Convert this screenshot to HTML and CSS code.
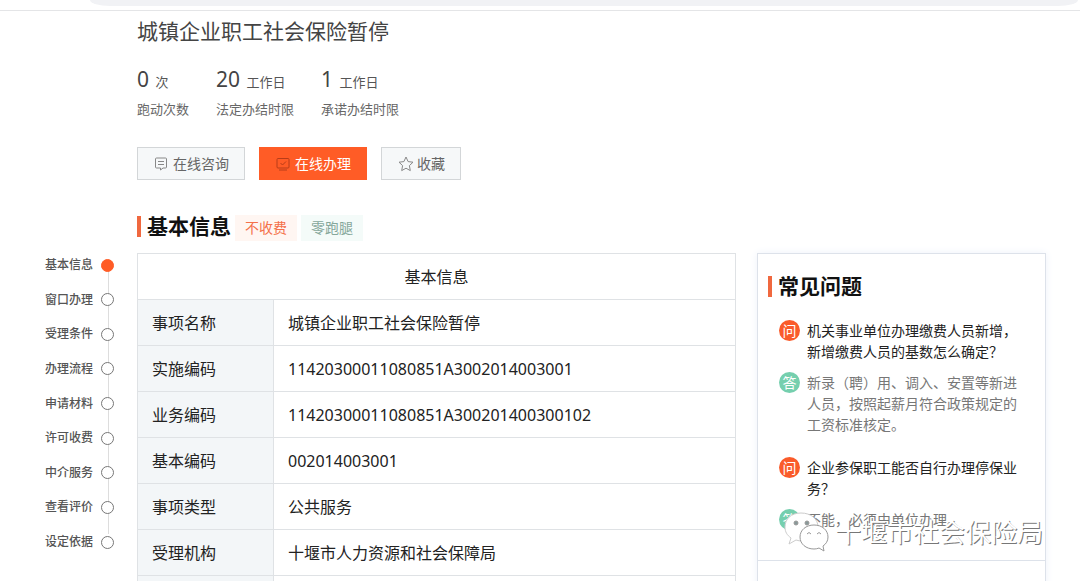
FILE: index.html
```html
<!DOCTYPE html>
<html lang="zh-CN">
<head>
<meta charset="utf-8">
<title>城镇企业职工社会保险暂停</title>
<link rel="stylesheet" href="styles.css">
</head>
<body>
<div class="page">
  <div class="browser-bar"><div class="address"></div></div>
  <div class="layout">
    <header class="summary">
      <h1 class="title">城镇企业职工社会保险暂停</h1>
      <dl class="stats">
        <div class="stat"><dd><b>0</b> 次</dd><dt>跑动次数</dt></div>
        <div class="stat"><dd><b>20</b> 工作日</dd><dt>法定办结时限</dt></div>
        <div class="stat"><dd><b>1</b> 工作日</dd><dt>承诺办结时限</dt></div>
      </dl>
      <div class="actions">
        <button class="btn" type="button">
          <svg class="icon" viewBox="0 0 14 14" aria-hidden="true"><path d="M2.500 1h9q1 0 1 1v8q0 1-1 1H9l-2.500 2v-2h-4q-1 0-1-1V2q0-1 1-1zM4 4.500h6M4 7.500h6"/></svg>在线咨询</button>
        <button class="btn btn-primary" type="button">
          <svg class="icon" viewBox="0 0 14 14" aria-hidden="true"><path d="M2 1.500h10q1 0 1 1v7.500q0 1-1 1H2q-1 0-1-1v-7.500q0-1 1-1zM4.500 6l2 2 3.500-3.500M3 13h8"/></svg>在线办理</button>
        <button class="btn" type="button">
          <svg class="icon icon-star" viewBox="0 0 16 16" aria-hidden="true"><path d="M8 1l2.100 4.600 4.900.600-3.600 3.400.900 5L8 12.200 3.700 14.600l.900-5L1 6.200l4.900-.600z"/></svg>收藏</button>
      </div>
      <div class="section-head">
        <h2 class="heading">基本信息</h2>
        <span class="tag tag-free">不收费</span>
        <span class="tag tag-zero">零跑腿</span>
      </div>
    </header>

    <nav class="steps" aria-label="目录">
      <a class="step active" href="#info">基本信息</a>
      <a class="step" href="#window">窗口办理</a>
      <a class="step" href="#condition">受理条件</a>
      <a class="step" href="#flow">办理流程</a>
      <a class="step" href="#material">申请材料</a>
      <a class="step" href="#fee">许可收费</a>
      <a class="step" href="#agency">中介服务</a>
      <a class="step" href="#review">查看评价</a>
      <a class="step" href="#basis">设定依据</a>
    </nav>

    <main class="main" id="info">
      <table class="info">
        <thead><tr><th colspan="2" scope="colgroup">基本信息</th></tr></thead>
        <tbody>
          <tr><th scope="row">事项名称</th><td>城镇企业职工社会保险暂停</td></tr>
          <tr><th scope="row">实施编码</th><td>11420300011080851A3002014003001</td></tr>
          <tr><th scope="row">业务编码</th><td>11420300011080851A300201400300102</td></tr>
          <tr><th scope="row">基本编码</th><td>002014003001</td></tr>
          <tr><th scope="row">事项类型</th><td>公共服务</td></tr>
          <tr><th scope="row">受理机构</th><td>十堰市人力资源和社会保障局</td></tr>
          <tr><th scope="row"></th><td></td></tr>
        </tbody>
      </table>
    </main>

    <aside class="faq">
      <div class="faq-body">
        <h2 class="heading">常见问题</h2>
        <div class="qa">
          <p class="line question"><span class="badge">问</span><span>机关事业单位办理缴费人员新增，新增缴费人员的基数怎么确定？</span></p>
          <p class="line answer"><span class="badge">答</span><span>新录（聘）用、调入、安置等新进人员，按照起薪月符合政策规定的工资标准核定。</span></p>
        </div>
        <div class="qa">
          <p class="line question"><span class="badge">问</span><span>企业参保职工能否自行办理停保业务？</span></p>
          <p class="line answer"><span class="badge">答</span><span>不能，必须由单位办理。</span></p>
        </div>
      </div>
    </aside>
  </div>
  <div class="watermark">
    <svg class="wechat" viewBox="0 0 48 42" aria-hidden="true">
      <path d="M20 2C10 2 4 8 4 16c0 5 2 8 6 11l-2 6 7-4c2 .700 4 1 6 1 9 0 16-6 16-14S30 2 20 2z" class="bubble-back"/>
      <path d="M33 14c-8 0-14 5-14 12s6 12 14 12c2 0 3.500-.300 5-1l5 3-1-5c3-2 5-5 5-9 0-7-6-12-14-12z"/>
      <g class="eyes"><circle cx="15" cy="12" r="2"/><circle cx="26" cy="12" r="2"/><path d="M26 23q2-3 4 0M36 23q2-3 4 0"/></g>
    </svg>
    <span>十堰市社会保险局</span>
  </div>
</div>
</body>
</html>
```
FILE: styles.css
```css
* { box-sizing: border-box; }
body {
  margin: 0;
  background: #fff;
  color: #222;
  font-family: "Noto Sans", "Noto Sans CJK SC", sans-serif;
  font-size: 14px;
}
h1, h2, p, dl, dd { margin: 0; }
.page { position: relative; height: 100vh; overflow: hidden; }
.browser-bar { height: 11px; padding: 0 2px 0 90px; border-bottom: 1px solid #e4e5e7; }
.address { height: 6px; background: #f1f2f5; border-radius: 0 0 20px 20px / 0 0 6px 6px; }
.layout {
  display: grid;
  grid-template-columns: 71px minmax(0, 1fr) 289px;
  column-gap: 21px;
  padding: 0 34px 0 45px;
}
.summary { grid-column: 2 / 4; }
.title { padding-top: 4px; font-size: 21px; line-height: 32px; font-weight: 400; color: #444; }
.stats { display: flex; gap: 27px; margin-top: 16px; }
.stat { display: flex; flex-direction: column; font-size: 13px; line-height: 20px; color: #666; }
.stat dd { line-height: 32px; color: #555; }
.stat dt { padding-top: 1px; }
.stat b { margin-right: 3px; font-size: 21px; font-weight: 400; color: #444; }
.actions { display: flex; gap: 14px; margin-top: 28px; }
.btn {
  display: flex;
  align-items: center;
  gap: 5px;
  height: 33px;
  padding: 0 15px 0 16px;
  border: 1px solid #d3d6d8;
  background: #f6f8f9;
  color: #666;
  font: inherit;
  line-height: 20px;
}
.btn-primary { border-color: #ff5c26; background: #ff5c26; color: #fff; }
.icon { width: 14px; height: 14px; fill: none; stroke: #888; stroke-width: 1; }
.btn-primary .icon { stroke: #b83c18; }
.icon-star { width: 16px; height: 16px; margin-right: -2px; }
.section-head { display: flex; align-items: center; gap: 4px; height: 26px; margin: 33px 0 14px; }
.heading {
  display: flex;
  align-items: center;
  gap: 6px;
  font-size: 21px;
  line-height: 30px;
  font-weight: 700;
  color: #111;
}
.heading::before { content: ""; width: 4px; height: 21px; background: #f0683f; }
.tag { margin-top: 4px; padding: 2px 10px; line-height: 22px; }
.tag-free { background: #fff6f2; color: #f4714a; }
.tag-zero { background: #f4fbf9; color: #86a79b; }
.steps {
  display: flex;
  flex-direction: column;
  justify-content: space-between;
  height: 297px;
  margin-top: 2px;
  background: linear-gradient(#ddd, #ddd) 63px 10px / 1px 269px no-repeat;
}
.step {
  display: flex;
  align-items: center;
  justify-content: space-between;
  color: #555;
  font-size: 12px;
  line-height: 20px;
  font-weight: 500;
  text-decoration: none;
}
.step::after {
  content: "";
  width: 11px;
  height: 11px;
  margin-right: 2px;
  border: 1px solid #777;
  border-radius: 50%;
  background: #fff;
}
.step.active::after { border-color: #ff5c26; background: #ff5c26; }
.info { width: 100%; border-collapse: collapse; font-size: 16px; line-height: 24px; }
.info th, .info td {
  height: 46px;
  padding: 0 14px;
  border: 1px solid #dfe2e5;
  text-align: left;
  font-weight: 400;
}
.info thead th { text-align: center; }
.info tbody th { width: 136px; background: #f3f6f8; }
.faq { border: 1px solid #dde2ea; box-shadow: 0 0 8px #eef2fa; }
.faq-body { padding: 17px 24px 30px 10px; border-bottom: 1px solid #dde2ea; }
.qa { padding: 19px 0 0 11px; }
.qa + .qa { padding-top: 22px; }
.line { display: flex; gap: 7px; line-height: 21px; }
.line + .line { margin-top: 10px; }
.question { color: #222; }
.answer { color: #777; }
.badge {
  flex: none;
  width: 21px;
  height: 21px;
  border-radius: 50%;
  background: #fa5b2a;
  color: #fff;
  text-align: center;
}
.answer .badge { background: #75cfae; }
.watermark {
  position: absolute;
  right: 37px;
  bottom: 28px;
  display: flex;
  align-items: center;
  gap: 6px;
  color: #fff;
  font-size: 26px;
  line-height: 40px;
  text-shadow: 1px 1px 0 #777;
}
.wechat { width: 48px; height: 42px; fill: #fff; stroke: #999; stroke-width: 1; }
.bubble-back { stroke: #ccc; }
.eyes { fill: #899; }
.eyes path { fill: none; }
```
